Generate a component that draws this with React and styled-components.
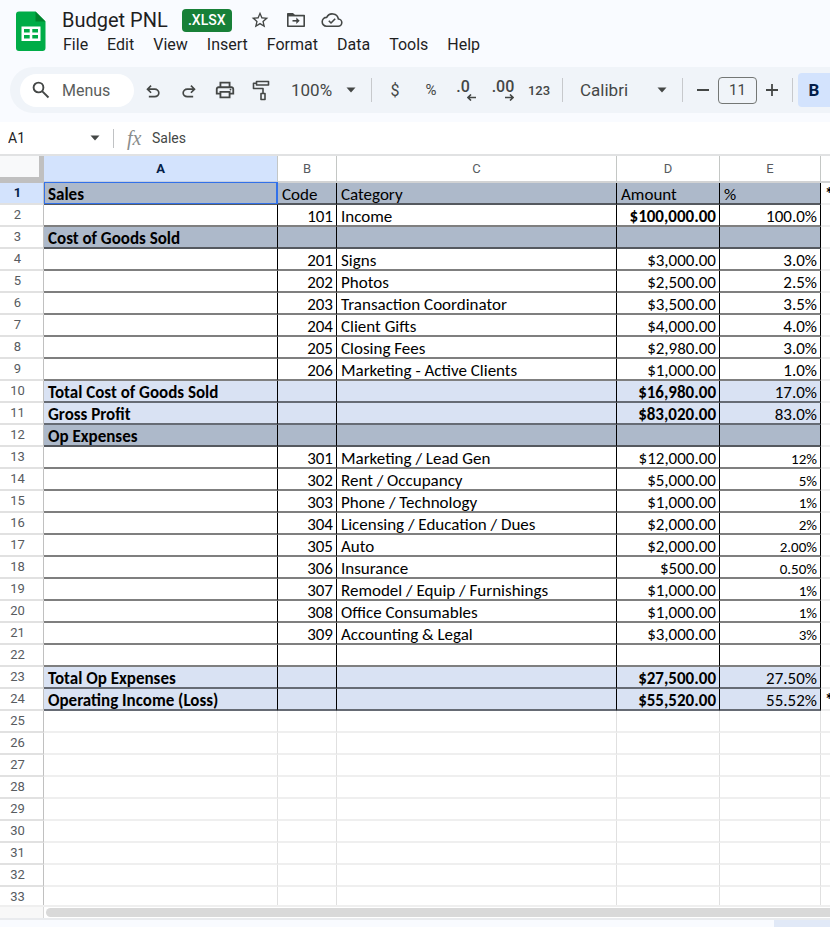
import React from "react";
import styled, { createGlobalStyle } from "styled-components";
import { MdStarBorder } from "react-icons/md";

const GlobalStyle = createGlobalStyle`
  * { box-sizing: border-box; }
  body { margin: 0; background: #f9fbff; overflow: hidden; }
  button, input, select { font: inherit; color: inherit; border: 0; margin: 0; padding: 0; background: none; outline: none; }
`;

const Page = styled.div`
  height: 100vh;
  display: flex;
  flex-direction: column;
  font-family: Roboto, "Liberation Sans", sans-serif;
  color: #444746;
  background: #f9fbff;
  overflow: hidden;
`;

const Header = styled.header`
  display: flex;
  padding: 8px 0 0 16px;
  height: 67px;
  flex: none;
`;

const Logo = styled.svg`
  width: 30px;
  height: 40px;
  margin: 3px 15px 0 0;
  flex: none;
`;

const TitleRow = styled.div`
  display: flex;
  align-items: center;
  height: 24px;
  padding-left: 1px;
`;

const Title = styled.h1`
  margin: 0 14px 0 0;
  font-size: 20px;
  font-weight: 400;
  line-height: 24px;
  color: #1f1f1f;
`;

const Badge = styled.span`
  width: 50px;
  height: 23px;
  border-radius: 4px;
  background: #188038;
  color: #fff;
  font-size: 14px;
  font-weight: 500;
  line-height: 23px;
  text-align: center;
  margin-right: 10px;
`;

const TitleButton = styled.button`
  width: 36px;
  height: 24px;
  display: grid;
  place-items: center;
`;

const MenuBar = styled.nav`
  display: flex;
  gap: 19px;
  padding-left: 2px;
  margin-top: 3px;
`;

const MenuButton = styled.button`
  font-size: 16px;
  line-height: 20px;
  color: #1f1f1f;
`;

const Toolbar = styled.div`
  flex: none;
  display: flex;
  align-items: center;
  height: 46px;
  margin-left: 10px;
  padding-left: 10px;
  border-radius: 23px 0 0 23px;
  background: #f0f4f9;
  overflow: hidden;
`;

const Search = styled.label`
  flex: none;
  display: flex;
  align-items: center;
  gap: 12px;
  width: 114px;
  height: 33px;
  margin-right: 1px;
  padding-left: 12px;
  border-radius: 17px;
  background: #fff;
  font-size: 16px;
  input { width: 56px; }
  input::placeholder { color: #5b5e5d; opacity: 1; }
`;

const ToolButton = styled.button`
  flex: none;
  width: 36px;
  height: 34px;
  display: grid;
  place-items: center;
  font-size: ${(p) => p.$size || 16}px;
  font-weight: ${(p) => (p.$strong ? 500 : 400)};
`;

const BoldButton = styled(ToolButton)`
  width: 32px;
  border-radius: 4px 0 0 4px;
  background: #d3e3fd;
  color: #041e49;
  font-size: 17px;
  font-weight: 700;
`;

const Decimal = styled.span`
  display: flex;
  flex-direction: column;
  align-items: flex-end;
  padding-right: ${(p) => (p.$left ? 8 : 0)}px;
  font-size: 16px;
  font-weight: 500;
  line-height: 14px;
  svg { margin-right: ${(p) => (p.$left ? -6 : 0)}px; }
`;

const Divider = styled.span`
  flex: none;
  width: 1px;
  height: 24px;
  margin: 0 5px;
  background: #c7c9cc;
`;

const Picker = styled.div`
  flex: none;
  display: flex;
  align-items: center;
  width: ${(p) => p.$width}px;
  padding: 0 10px 0 12px;
  font-size: 17px;
  select { flex: 1; min-width: 0; appearance: none; }
`;

const SizeInput = styled.input`
  flex: none;
  width: 39px;
  height: 27px;
  border: 1px solid #747775;
  border-radius: 4px;
  text-align: center;
  font-size: 15px;
`;

const StepButton = styled(ToolButton)`
  width: 30px;
`;

const FormulaBar = styled.div`
  flex: none;
  display: flex;
  align-items: center;
  height: 32px;
  margin-top: 9px;
  padding-left: 8px;
  background: #fff;
`;

const NameBox = styled.input`
  width: 82px;
  font-size: 14px;
  color: #1f1f1f;
`;

const FormulaDivider = styled.span`
  width: 1px;
  height: 19px;
  margin: 0 13px 0 13px;
  background: #c0c2c4;
`;

const Fx = styled.span`
  width: 25px;
  font-family: "Liberation Serif", serif;
  font-style: italic;
  font-size: 20px;
  line-height: 20px;
  color: #8a8d8c;
`;

const FormulaInput = styled.input`
  flex: 1;
  font-size: 14px;
`;

const Grid = styled.main`
  flex: 1;
  min-height: 0;
  overflow: hidden;
  background: #fff;
  border-top: 2px solid #e1e2e3;
`;

const Sheet = styled.table`
  width: 100%;
  table-layout: fixed;
  border-collapse: separate;
  border-spacing: 0;
`;

const Col = styled.col`
  width: ${(p) => (p.$width ? p.$width + "px" : "auto")};
`;

const ColumnHead = styled.th`
  height: 27px;
  padding: 0;
  border-right: 1px solid #c4c7c5;
  border-bottom: 2px solid ${(p) => (p.$active ? "#c5cfe2" : "#d2d3d4")};
  background: ${(p) => (p.$active ? "#d3e3fd" : "#fff")};
  color: ${(p) => (p.$active ? "#041e49" : "#575b5f")};
  font-size: 13px;
  font-weight: ${(p) => (p.$active ? 700 : 400)};
  &:last-child { border-right: 0; }
`;

const Corner = styled.td`
  padding: 0;
  background: #f8f9fa;
  border-right: 5px solid #c0c0c0;
  border-bottom: 6px solid #c0c0c0;
`;

const RowHead = styled.th`
  height: 22px;
  padding: 0 8px 0 0;
  border-right: 1px solid #c0c0c0;
  border-bottom: 2px solid #e1e1e1;
  background: ${(p) => (p.$active ? "#d3e3fd" : "#fff")};
  color: ${(p) => (p.$active ? "#041e49" : "#575b5f")};
  font-size: 13px;
  font-weight: ${(p) => (p.$active ? 700 : 400)};
  line-height: 20px;
`;

const fills = { head: "#adb9ca", total: "#d9e2f3" };
const lines = { head: "#55595f", total: "#666b74", plain: "#7f7f7f" };

const Cell = styled.td`
  position: relative;
  height: 22px;
  padding: 4px 3px 0 4px;
  background: ${(p) => fills[p.$kind] || "#fff"};
  border-right: 1px solid ${(p) => (p.$kind ? "#000" : "#e0e0e0")};
  border-bottom: 2px solid ${(p) => lines[p.$kind] || "#efefef"};
  color: #000;
  font-family: Carlito, Calibri, Lato, sans-serif;
  font-size: ${(p) => (p.$small ? 15 : 17)}px;
  font-weight: ${(p) => (p.$bold ? 700 : 400)};
  line-height: 16px;
  text-align: ${(p) => (p.$right ? "right" : "left")};
  white-space: nowrap;
  overflow: ${(p) => (p.$selected ? "visible" : "hidden")};
  &:last-child { border-right: 0; }
  &::after {
    content: ${(p) => (p.$selected ? '""' : "none")};
    position: absolute;
    inset: -1px -1px -1px 0;
    border: 1px solid #3271ea;
    border-right-width: 2px;
  }
`;

const ScrollRow = styled.div`
  flex: none;
  height: 15px;
  display: flex;
  border-top: 2px solid #efefef;
  border-bottom: 2px solid #e9ebee;
  background: #fff;
`;

const ScrollCorner = styled.span`
  width: 44px;
  border-right: 1px solid #d8d8d8;
  background: #f8f8f8;
`;

const ScrollThumb = styled.span`
  flex: 1;
  margin: 1px 0 1px 2px;
  border-radius: 5px 0 0 5px;
  background: #d9d9d9;
`;

const TabStrip = styled.footer`
  flex: none;
  height: 7px;
  display: flex;
  justify-content: flex-end;
`;

const ActiveTab = styled.span`
  width: 56px;
  background: #e1e9f7;
`;

const Caret = () => (
  <svg width="10" height="6" viewBox="0 0 10 6" aria-hidden="true"><path d="M0.5 0.5h9L5 5.5z" fill="#444746" /></svg>
);

const MoveIcon = () => (
  <svg width="20" height="16" viewBox="0 0 20 16" fill="none" stroke="currentColor" strokeWidth="1.600">
    <path d="M1.800 3.500V14.200H18.200V3.500z" strokeLinejoin="round" />
    <path d="M1 4.300V1.800Q1 1 1.800 1H7l2 2h9.200v1.300z" fill="currentColor" stroke="none" />
    <path d="M6.500 8.800H12" />
    <path d="M10.300 5.600L13.700 8.800L10.300 12z" fill="currentColor" stroke="none" />
  </svg>
);

const CloudIcon = () => (
  <svg width="22" height="16" viewBox="0 0 22 16" fill="none" stroke="currentColor" strokeWidth="1.600" strokeLinejoin="round">
    <path d="M5.500 14.200H17a3.600 3.600 0 0 0 .4-7.200A6.200 6.200 0 0 0 5.700 5.400A4.400 4.400 0 0 0 5.500 14.200z" />
    <path d="M7.800 8.800L10 11L14.200 6.800" />
  </svg>
);

const UndoIcon = () => (
  <svg width="20" height="20" viewBox="0 0 24 24" fill="currentColor"><path d="M7 21v-2h7.100q1.575 0 2.738-1T18 15.500t-1.162-2.500T14.100 12H7.800l2.600 2.600L9 16l-5-5 5-5 1.400 1.400L7.800 10h6.300q2.425 0 4.163 1.575T20 15.500t-1.737 3.925T14.100 21z" /></svg>
);

const RedoIcon = () => (
  <svg width="20" height="20" viewBox="0 0 24 24" fill="currentColor"><path d="M17 21v-2H9.900q-1.575 0-2.738-1T6 15.500t1.162-2.500T9.900 12h6.300l-2.600 2.600L15 16l5-5-5-5-1.400 1.400L16.200 10H9.900q-2.425 0-4.163 1.575T4 15.500t1.737 3.925T9.900 21z" /></svg>
);

const PrintIcon = () => (
  <svg width="22" height="22" viewBox="0 0 24 24" fill="currentColor"><path d="M16 8V5H8v3H6V3h12v5zM18 12.500q.425 0 .713-.288T19 11.500t-.288-.712T18 10.500t-.712.288T17 11.500t.288.713t.712.287M16 19v-4H8v4zm2 2H6v-4H2v-6q0-1.275.875-2.137T5 8h14q1.275 0 2.138.863T22 11v6h-4zm2-6v-4q0-.425-.288-.712T19 10H5q-.425 0-.712.288T4 11v4h2v-2h12v2z" /></svg>
);

const RollerIcon = () => (
  <svg width="18" height="22" viewBox="0 0 18 22" fill="none" stroke="currentColor" strokeWidth="1.600" strokeLinejoin="round"><path d="M4.500 2.500h12v3.500h-12zM4.500 4.200H1.500v5.300H11v5M9 14.500h4v6H9z" /></svg>
);

const SearchIcon = () => (
  <svg width="18" height="18" viewBox="0 0 18 18" fill="none" stroke="#444746" strokeWidth="1.900"><circle cx="6.500" cy="6.500" r="4.900" /><path d="M10.100 10.100L16.500 16.500" /></svg>
);

const Arrow = ({ right }) => (
  <svg width="9" height="7" viewBox="0 0 9 7" fill="none" stroke="currentColor" strokeWidth="1.600">
    <path d={right ? "M0 3.500H8M5 0.500L8 3.500L5 6.500" : "M9 3.500H1M4 0.500L1 3.500L4 6.500"} />
  </svg>
);

const item = (category, code, amount, percent, small) => ({ cells: ["", code, category, amount, percent], kind: "plain", small });
const section = (name) => ({ cells: [name, "", "", "", ""], kind: "head" });
const total = (name, amount, percent, note) => ({ cells: [name, "", "", amount, percent], kind: "total", boldAmount: true, note });

const rows = [
  { cells: ["Sales", "Code", "Category", "Amount", "%"], kind: "head", labels: true, note: "*" },
  { ...item("Income", "101", "$100,000.00", "100.0%"), boldAmount: true },
  section("Cost of Goods Sold"),
  item("Signs", "201", "$3,000.00", "3.0%"),
  item("Photos", "202", "$2,500.00", "2.5%"),
  item("Transaction Coordinator", "203", "$3,500.00", "3.5%"),
  item("Client Gifts", "204", "$4,000.00", "4.0%"),
  item("Closing Fees", "205", "$2,980.00", "3.0%"),
  item("Marketing - Active Clients", "206", "$1,000.00", "1.0%"),
  total("Total Cost of Goods Sold", "$16,980.00", "17.0%"),
  total("Gross Profit", "$83,020.00", "83.0%"),
  section("Op Expenses"),
  item("Marketing / Lead Gen", "301", "$12,000.00", "12%", true),
  item("Rent / Occupancy", "302", "$5,000.00", "5%", true),
  item("Phone / Technology", "303", "$1,000.00", "1%", true),
  item("Licensing / Education / Dues", "304", "$2,000.00", "2%", true),
  item("Auto", "305", "$2,000.00", "2.00%", true),
  item("Insurance", "306", "$500.00", "0.50%", true),
  item("Remodel / Equip / Furnishings", "307", "$1,000.00", "1%", true),
  item("Office Consumables", "308", "$1,000.00", "1%", true),
  item("Accounting & Legal", "309", "$3,000.00", "3%", true),
  item("", "", "", ""),
  total("Total Op Expenses", "$27,500.00", "27.50%"),
  total("Operating Income (Loss)", "$55,520.00", "55.52%", "*"),
  ...Array.from({ length: 9 }, () => ({ cells: ["", "", "", "", ""] })),
];

const menus = ["File", "Edit", "View", "Insert", "Format", "Data", "Tools", "Help"];
const widths = [44, 234, 59, 280, 103, 101, null];

export default function App() {
  return (
    <Page>
      <GlobalStyle />
      <Header>
        <Logo viewBox="0 0 30 40" aria-label="Sheets">
          <path d="M3 0.500H19.500L29.500 10.500V37a3 3 0 0 1-3 3H3a3 3 0 0 1-3-3V3.500a3 3 0 0 1 3-3z" fill="#00ac47" />
          <path d="M19.500 0.500L29.500 10.500H19.500z" fill="#00832d" />
          <path d="M5.500 15.500h19v14.500h-19zM8 18v3.500h5.700V18zM16.300 18v3.500H22V18zM8 24v3.500h5.700V24zM16.300 24v3.500H22V24z" fill="#fff" fillRule="evenodd" />
        </Logo>
        <div>
          <TitleRow>
            <Title>Budget PNL</Title>
            <Badge>.XLSX</Badge>
            <TitleButton aria-label="Star"><MdStarBorder size={20} /></TitleButton>
            <TitleButton aria-label="Move"><MoveIcon /></TitleButton>
            <TitleButton aria-label="Saved to Drive"><CloudIcon /></TitleButton>
          </TitleRow>
          <MenuBar>{menus.map((m) => <MenuButton key={m}>{m}</MenuButton>)}</MenuBar>
        </div>
      </Header>

      <Toolbar>
        <Search><SearchIcon /><input placeholder="Menus" aria-label="Search the menus" /></Search>
        <ToolButton aria-label="Undo"><UndoIcon /></ToolButton>
        <ToolButton aria-label="Redo"><RedoIcon /></ToolButton>
        <ToolButton aria-label="Print"><PrintIcon /></ToolButton>
        <ToolButton aria-label="Paint format"><RollerIcon /></ToolButton>
        <Picker $width={87}>
          <select aria-label="Zoom"><option>100%</option></select><Caret />
        </Picker>
        <Divider />
        <ToolButton aria-label="Currency">$</ToolButton>
        <ToolButton aria-label="Percent" $size={15}>%</ToolButton>
        <ToolButton aria-label="Decrease decimal places"><Decimal $left>.0<Arrow /></Decimal></ToolButton>
        <ToolButton aria-label="Increase decimal places"><Decimal>.00<Arrow right /></Decimal></ToolButton>
        <ToolButton aria-label="More formats" $size={13} $strong>123</ToolButton>
        <Divider />
        <Picker $width={109}>
          <select aria-label="Font"><option>Calibri</option></select><Caret />
        </Picker>
        <Divider />
        <StepButton aria-label="Decrease font size">
          <svg width="12" height="12" viewBox="0 0 12 12" stroke="currentColor" strokeWidth="1.800"><path d="M0 6H12" /></svg>
        </StepButton>
        <SizeInput aria-label="Font size" defaultValue="11" />
        <StepButton aria-label="Increase font size">
          <svg width="12" height="12" viewBox="0 0 12 12" stroke="currentColor" strokeWidth="1.800"><path d="M0 6H12M6 0V12" /></svg>
        </StepButton>
        <Divider />
        <BoldButton aria-label="Bold">B</BoldButton>
      </Toolbar>

      <FormulaBar>
        <NameBox aria-label="Name box" defaultValue="A1" />
        <Caret />
        <FormulaDivider />
        <Fx>fx</Fx>
        <FormulaInput aria-label="Formula" defaultValue="Sales" />
      </FormulaBar>

      <Grid>
        <Sheet>
          <colgroup>{widths.map((w, i) => <Col key={i} $width={w} />)}</colgroup>
          <thead>
            <tr>
              <Corner />
              {["A", "B", "C", "D", "E", ""].map((c, i) => <ColumnHead key={i} scope="col" $active={i === 0}>{c}</ColumnHead>)}
            </tr>
          </thead>
          <tbody>
            {rows.map((row, r) => (
              <tr key={r}>
                <RowHead scope="row" $active={r === 0}>{r + 1}</RowHead>
                {row.cells.map((text, c) => (
                  <Cell
                    key={c}
                    $kind={row.kind}
                    $bold={c === 0 || (c === 3 && row.boldAmount)}
                    $right={!row.labels && (c === 1 || c > 2)}
                    $small={row.small && c === 4}
                    $selected={r === 0 && c === 0}
                  >
                    {text}
                  </Cell>
                ))}
                <Cell $bold>{row.note}</Cell>
              </tr>
            ))}
          </tbody>
        </Sheet>
      </Grid>
      <ScrollRow><ScrollCorner /><ScrollThumb /></ScrollRow>
      <TabStrip><ActiveTab /></TabStrip>
    </Page>
  );
}
